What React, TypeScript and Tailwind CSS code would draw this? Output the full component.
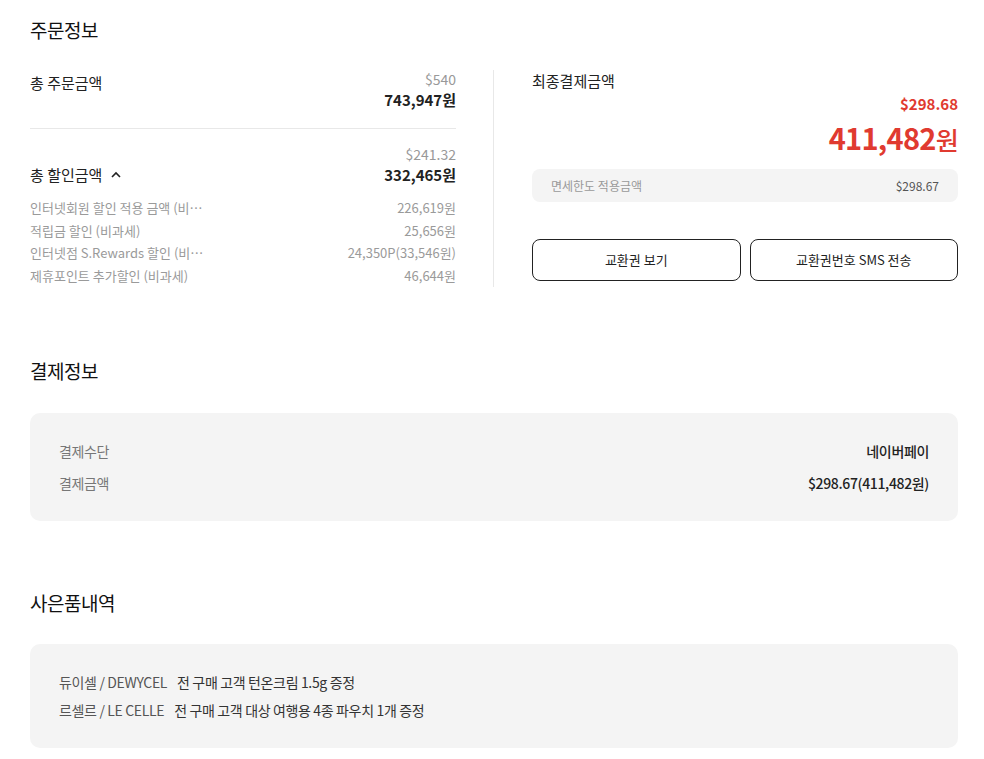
export default function App() {
  const discounts = [
    { label: "인터넷회원 할인 적용 금액 (비…", value: "226,619원" },
    { label: "적립금 할인 (비과세)", value: "25,656원" },
    { label: "인터넷점 S.Rewards 할인 (비…", value: "24,350P(33,546원)" },
    { label: "제휴포인트 추가할인 (비과세)", value: "46,644원" },
  ];

  return (
    <div className="min-h-screen bg-white pl-[30px] pr-[26px] pt-[16px] pb-[12px] font-['Noto_Sans_CJK_KR',sans-serif] text-[#222]">
      {/* 주문정보 */}
      <h2 className="text-[19px] leading-[28px] font-normal tracking-tight text-[#111]">주문정보</h2>

      <div className="mt-[26px] flex">
        <div className="w-[426px]">
          <div className="flex justify-between border-b border-[#e8e8e8] pb-[16px]">
            <span className="text-[15px] leading-[22px] mt-[2px]">총 주문금액</span>
            <div className="flex flex-col items-end">
              <span className="text-[14px] leading-[18px] text-[#999]">$540</span>
              <span className="text-[15px] leading-[24px] font-bold">743,947원</span>
            </div>
          </div>

          <div className="mt-[16px] flex items-end justify-between">
            <div className="flex items-center gap-[8px] pb-[1px]">
              <span className="text-[15px] leading-[22px]">총 할인금액</span>
              <svg width="12" height="8" viewBox="0 0 12 8" fill="none">
                <path d="M2 6 L6 2 L10 6" stroke="#222" strokeWidth="1.6" />
              </svg>
            </div>
            <div className="flex flex-col items-end">
              <span className="text-[14px] leading-[18px] text-[#999]">$241.32</span>
              <span className="text-[15px] leading-[24px] font-bold">332,465원</span>
            </div>
          </div>

          <div className="mt-[10px] flex flex-col">
            {discounts.map((d) => (
              <div key={d.label} className="flex justify-between text-[13px] leading-[22.5px] text-[#9a9a9a]">
                <span>{d.label}</span>
                <span>{d.value}</span>
              </div>
            ))}
          </div>
        </div>

        <div className="ml-[37px] mr-[38px] w-px bg-[#e8e8e8] self-stretch" />

        <div className="w-[426px]">
          <div className="text-[15px] leading-[22px]">최종결제금액</div>
          <div className="flex flex-col items-end">
            <span className="mt-[2px] text-[15px] leading-[20px] font-bold text-[#e03a30]">$298.68</span>
            <span className="mt-[1px] text-[29px] leading-[44px] font-bold text-[#e03a30] tracking-tight">
              411,482<span className="text-[25px] font-medium">원</span>
            </span>
          </div>
          <div className="mt-[8px] flex h-[33px] items-center justify-between rounded-[8px] bg-[#f4f4f4] px-[19px] text-[12px]">
            <span className="text-[#999]">면세한도 적용금액</span>
            <span className="text-[#555]">$298.67</span>
          </div>
          <div className="mt-[37px] flex gap-[9px]">
            <button className="h-[42px] flex-1 rounded-[8px] border border-[#222] text-[13px]">교환권 보기</button>
            <button className="h-[42px] flex-1 rounded-[8px] border border-[#222] text-[13px]">교환권번호 SMS 전송</button>
          </div>
        </div>
      </div>

      {/* 결제정보 */}
      <h2 className="mt-[70px] text-[19px] leading-[28px] font-normal tracking-tight text-[#111]">결제정보</h2>
      <div className="mt-[28px] flex flex-col gap-[10px] rounded-[10px] bg-[#f4f4f4] px-[29px] py-[27px]">
        <div className="flex justify-between text-[14px] leading-[22px] tracking-tight">
          <span className="text-[#777]">결제수단</span>
          <span className="font-medium text-[#222]">네이버페이</span>
        </div>
        <div className="flex justify-between text-[14px] leading-[22px] tracking-tight">
          <span className="text-[#777]">결제금액</span>
          <span className="font-medium text-[#222]">$298.67(411,482원)</span>
        </div>
      </div>

      {/* 사은품내역 */}
      <h2 className="mt-[68px] text-[19px] leading-[28px] font-normal tracking-tight text-[#111]">사은품내역</h2>
      <div className="mt-[27px] flex flex-col gap-[6px] rounded-[10px] bg-[#f4f4f4] px-[29px] py-[27px] text-[14px] leading-[22px] text-[#555] tracking-tight">
        <div>
          듀이셀 / DEWYCEL<span className="ml-[10px] text-[#333]">전 구매 고객 턴온크림 1.5g 증정</span>
        </div>
        <div>
          르셀르 / LE CELLE<span className="ml-[10px] text-[#333]">전 구매 고객 대상 여행용 4종 파우치 1개 증정</span>
        </div>
      </div>
    </div>
  );
}
